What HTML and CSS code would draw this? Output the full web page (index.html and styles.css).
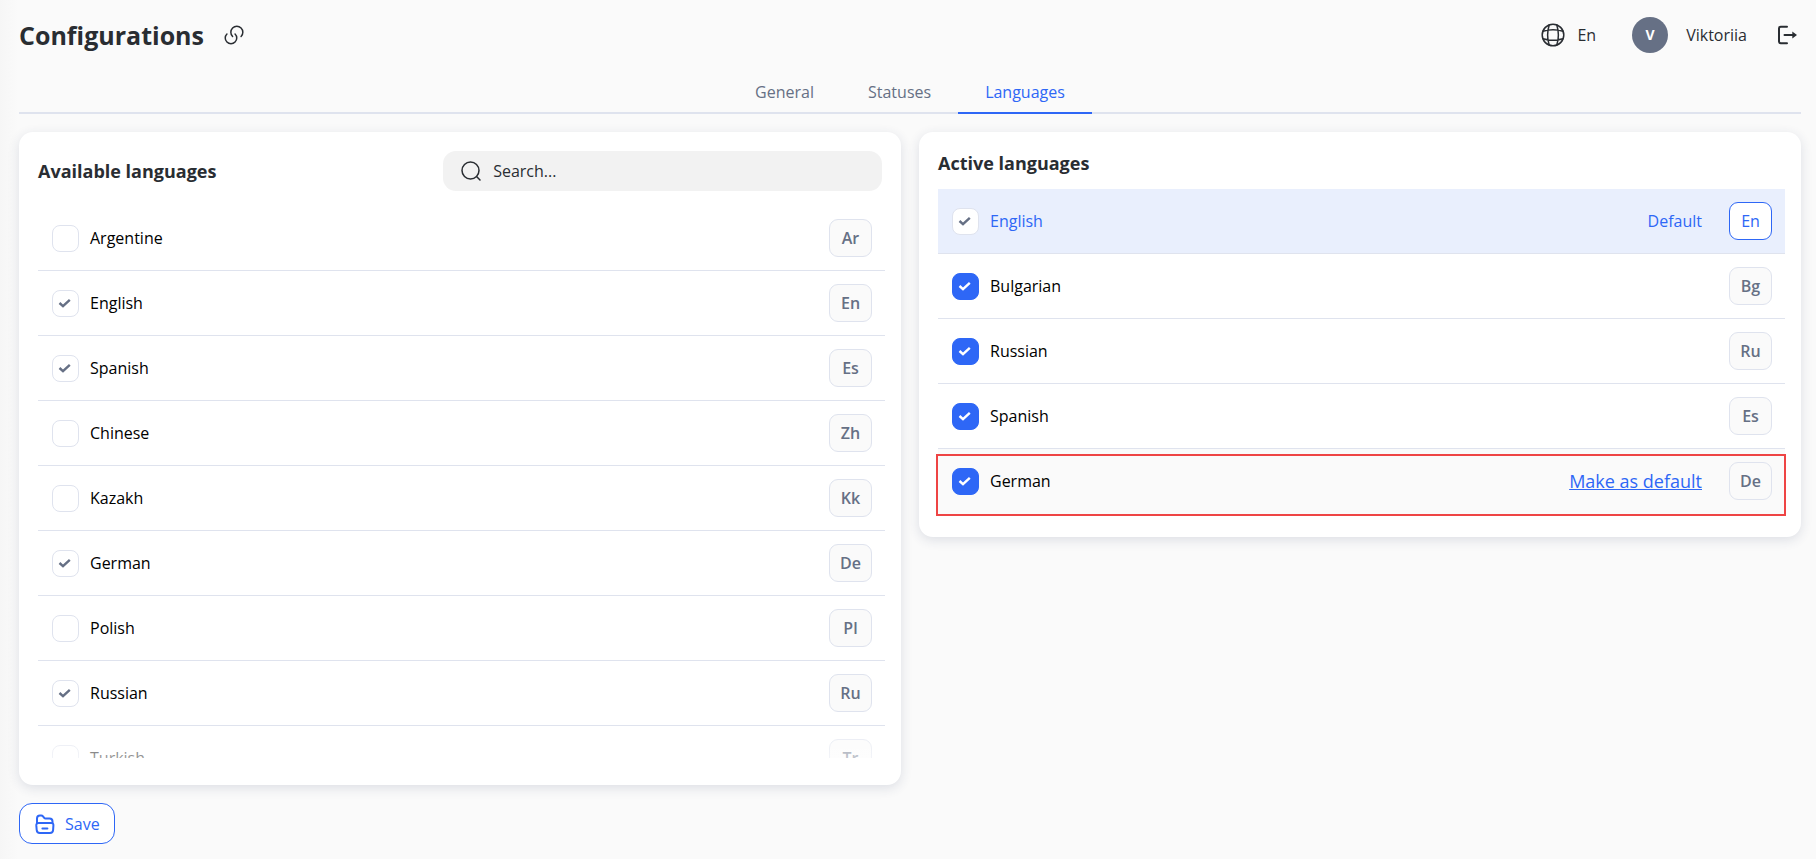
FILE: index.html
```
<!DOCTYPE html>
<html lang="en">
<head>
    <meta charset="UTF-8">
    <meta name="viewport" content="width=device-width, initial-scale=1.0">
    <title>Configurations</title>
    <link rel="stylesheet" href="styles.css">
</head>
<body>
    <header class="header">
        <h1>Configurations</h1>
        <a href="#" class="pageLink" aria-label="Copy link">
            <svg width="24" height="24" viewBox="0 0 24 24">
                <path d="M13.06 10.94C15.31 13.19 15.31 16.83 13.06 19.07C10.81 21.31 7.17 21.32 4.93 19.07C2.69 16.82 2.68 13.18 4.93 10.94"/>
                <path d="M10.59 13.41C8.25 11.07 8.25 7.27 10.59 4.92C12.93 2.57 16.73 2.58 19.08 4.92C21.43 7.26 21.42 11.06 19.08 13.41"/>
            </svg>
        </a>
        <div class="userPanel">
            <button type="button" class="langButton">
                <svg width="24" height="24" viewBox="0 0 24 24">
                    <circle cx="12" cy="12" r="10.8"/>
                    <path d="M8.2 2C6.3 8 6.3 16 8.2 22M15.8 2C17.7 8 17.7 16 15.8 22M2 8.2C8 6.4 16 6.4 22 8.2M2 15.8C8 17.6 16 17.6 22 15.8"/>
                </svg>
                En
            </button>
            <span class="avatar">V</span>
            <span class="userName">Viktoriia</span>
            <button type="button" class="logout" aria-label="Log out">
                <svg width="22" height="22" viewBox="0 0 22 22">
                    <path d="M11 2.7H4.8Q3 2.7 3 4.5V17.5Q3 19.3 4.8 19.3H11M8.5 11H18"/>
                    <path class="arrow" d="M16.3 7.5L21 11L16.3 14.5Z"/>
                </svg>
            </button>
        </div>
    </header>

    <nav class="tabs">
        <a href="#general">General</a>
        <a href="#statuses">Statuses</a>
        <a href="#languages" class="active">Languages</a>
    </nav>

    <main class="columns">
        <section class="card available">
            <div class="cardHead">
                <h2>Available languages</h2>
                <label class="search">
                    <svg width="20" height="20" viewBox="0 0 20 20">
                        <circle cx="9.5" cy="9.5" r="8.5"/>
                        <path d="M15.8 15.8L19 19"/>
                    </svg>
                    <input type="text" placeholder="Search..." aria-label="Search">
                </label>
            </div>
            <div class="listWrap">
                <ul class="list">
                    <li><label><input type="checkbox">Argentine</label><span class="code">Ar</span></li>
                    <li><label><input type="checkbox" checked>English</label><span class="code">En</span></li>
                    <li><label><input type="checkbox" checked>Spanish</label><span class="code">Es</span></li>
                    <li><label><input type="checkbox">Chinese</label><span class="code">Zh</span></li>
                    <li><label><input type="checkbox">Kazakh</label><span class="code">Kk</span></li>
                    <li><label><input type="checkbox" checked>German</label><span class="code">De</span></li>
                    <li><label><input type="checkbox">Polish</label><span class="code">Pl</span></li>
                    <li><label><input type="checkbox" checked>Russian</label><span class="code">Ru</span></li>
                    <li><label><input type="checkbox">Turkish</label><span class="code">Tr</span></li>
                </ul>
            </div>
        </section>

        <section class="card selected">
            <h2>Active languages</h2>
            <ul class="list">
                <li class="default"><label><input type="checkbox" checked>English</label><span class="defaultText">Default</span><span class="code">En</span></li>
                <li><label><input type="checkbox" checked>Bulgarian</label><span class="code">Bg</span></li>
                <li><label><input type="checkbox" checked>Russian</label><span class="code">Ru</span></li>
                <li><label><input type="checkbox" checked>Spanish</label><span class="code">Es</span></li>
                <li class="marked"><label><input type="checkbox" checked>German</label><a href="#" class="makeDefault">Make as default</a><span class="code">De</span></li>
            </ul>
        </section>
    </main>

    <button type="button" class="save">
        <svg width="20" height="20" viewBox="0 0 20 20">
            <path d="M2 9V4.5Q2 1.5 5 1.5H6.3Q7.3 1.5 8 2.3L9.2 3.8Q9.7 4.4 10.5 4.4H14.5Q17.5 4.4 17.5 7.4V9"/>
            <path d="M3.6 9H16.2Q18.6 9 18.4 11.4L18.1 16Q17.9 19 15 19H4.8Q1.9 19 1.7 16L1.3 11.4Q1.2 9 3.6 9ZM7.4 14.4H12.4"/>
        </svg>
        Save
    </button>
</body>
</html>
```
FILE: styles.css
```
* {
    box-sizing: border-box;
}
body {
    margin: 0;
    padding: 0 15px 15px 19px;
    min-height: 100vh;
    background: linear-gradient(to right, #f6f6f6, #fafafa 18px);
    color: #000;
    font-family: "Open Sans", "Noto Sans", sans-serif;
    font-size: 16px;
    line-height: 24px;
}
h1, h2 {
    margin: 0;
    color: #292d32;
    font-weight: 700;
}
h1 {
    font-size: 25px;
    line-height: 36px;
}
h2 {
    font-size: 18px;
}
svg {
    display: block;
    fill: none;
    stroke: #292d32;
    stroke-width: 1.5;
    stroke-linecap: round;
    stroke-linejoin: round;
}
button {
    padding: 0;
    border: 0;
    background: none;
    color: #292d32;
    font: inherit;
    cursor: pointer;
}

/* Header */
.header {
    display: flex;
    align-items: center;
    padding: 17px 3px 0 0;
}
.pageLink {
    margin-left: 18px;
}
.userPanel {
    display: flex;
    align-items: center;
    margin-left: auto;
}
.langButton {
    display: flex;
    align-items: center;
    gap: 12px;
}
.avatar {
    width: 36px;
    height: 36px;
    margin: 0 18px 0 36px;
    border-radius: 50%;
    background: #667085;
    color: #fff;
    font-size: 14px;
    font-weight: 700;
    line-height: 36px;
    text-align: center;
}
.userName {
    color: #292d32;
}
.logout {
    margin-left: 29px;
}
.logout svg {
    stroke-width: 2;
}
.logout .arrow {
    fill: #292d32;
    stroke: none;
}

/* Tabs */
.tabs {
    display: flex;
    justify-content: center;
    margin-top: 20px;
    border-bottom: 2px solid #dfe3ee;
}
.tabs a {
    margin-bottom: -2px;
    padding: 7px 27px 8px;
    border-bottom: 2px solid transparent;
    color: #667085;
    text-decoration: none;
}
.tabs a.active {
    border-color: #2e67f6;
    color: #2e67f6;
    font-weight: 500;
}

/* Cards */
.columns {
    display: grid;
    grid-template-columns: 1fr 1fr;
    align-items: start;
    gap: 18px;
    margin-top: 18px;
}
.card {
    padding: 19px 16px 23px 19px;
    border-radius: 14px;
    background: #fff;
    box-shadow: 0 3px 12px rgba(40, 60, 100, 0.14);
}
.available {
    padding-bottom: 27px;
}
.cardHead {
    display: flex;
    align-items: center;
    justify-content: space-between;
    padding-right: 3px;
}
.search {
    display: flex;
    align-items: center;
    flex: 0 0 52%;
    gap: 12px;
    height: 40px;
    padding: 0 18px;
    border-radius: 13px;
    background: #f2f2f2;
}
.search input {
    flex: 1;
    min-width: 0;
    padding: 0;
    border: 0;
    outline: 0;
    background: none;
    font: inherit;
}
.search input::placeholder {
    color: #292d32;
    opacity: 1;
}
.listWrap {
    position: relative;
    height: 552px;
    margin-top: 15px;
    overflow: hidden;
}
.listWrap::after {
    content: "";
    position: absolute;
    left: 0;
    right: 0;
    bottom: 0;
    height: 28px;
    background: linear-gradient(rgba(255, 255, 255, 0.3), rgba(255, 255, 255, 0.6));
}
.selected h2 {
    margin-bottom: 14px;
}

/* Language rows */
.list {
    margin: 0;
    padding: 0;
    list-style: none;
}
.list li {
    display: flex;
    align-items: center;
    padding: 13px;
    border-bottom: 1px solid #dfe3ee;
}
.list label {
    display: flex;
    align-items: center;
    gap: 11px;
    margin-right: auto;
    font-weight: 500;
}
.list input {
    appearance: none;
    width: 27px;
    height: 27px;
    margin: 0 0 0 1px;
    border: 1px solid #dfe3ee;
    border-radius: 8px;
    background: #fff;
}
.list input:checked {
    background: #fff url("data:image/svg+xml,%3Csvg xmlns='http://www.w3.org/2000/svg' width='25' height='25'%3E%3Cpath d='M6.5 12L10 15.2L16.8 8.8' fill='none' stroke='%23667085' stroke-width='2.4'/%3E%3C/svg%3E") no-repeat center;
}
.selected li:not(.default) input:checked {
    border-color: #2e67f6;
    background: #2e67f6 url("data:image/svg+xml,%3Csvg xmlns='http://www.w3.org/2000/svg' width='25' height='25'%3E%3Cpath d='M6.5 12L10 15.2L16.8 8.8' fill='none' stroke='%23fff' stroke-width='2.4'/%3E%3C/svg%3E") no-repeat center;
}
.code {
    width: 43px;
    height: 38px;
    border: 1px solid #dfe3ee;
    border-radius: 9px;
    background: #fafafa;
    color: #667085;
    font-weight: 600;
    line-height: 36px;
    text-align: center;
}
.list .default {
    background: #e9effd;
    color: #2e67f6;
}
.default .code {
    border-color: #2e67f6;
    background: #fff;
    color: #2e67f6;
    font-weight: 500;
}
.defaultText {
    margin-right: 27px;
    font-weight: 500;
}
.makeDefault {
    margin-right: 27px;
    color: #2e67f6;
    font-size: 18px;
}
.list .marked {
    position: relative;
    border-color: transparent;
    background: #fafafa;
}
.marked::after {
    content: "";
    position: absolute;
    inset: 5px -1px -3px -2px;
    border: 2px solid #ee4444;
    pointer-events: none;
}

/* Save */
.save {
    display: flex;
    align-items: center;
    gap: 10px;
    height: 41px;
    margin-top: 18px;
    padding: 0 14px 0 15px;
    border: 1px solid #2e67f6;
    border-radius: 13px;
    background: #fff;
    color: #2e67f6;
    font-weight: 500;
}
.save svg {
    stroke: #2e67f6;
    stroke-width: 2;
}
```
